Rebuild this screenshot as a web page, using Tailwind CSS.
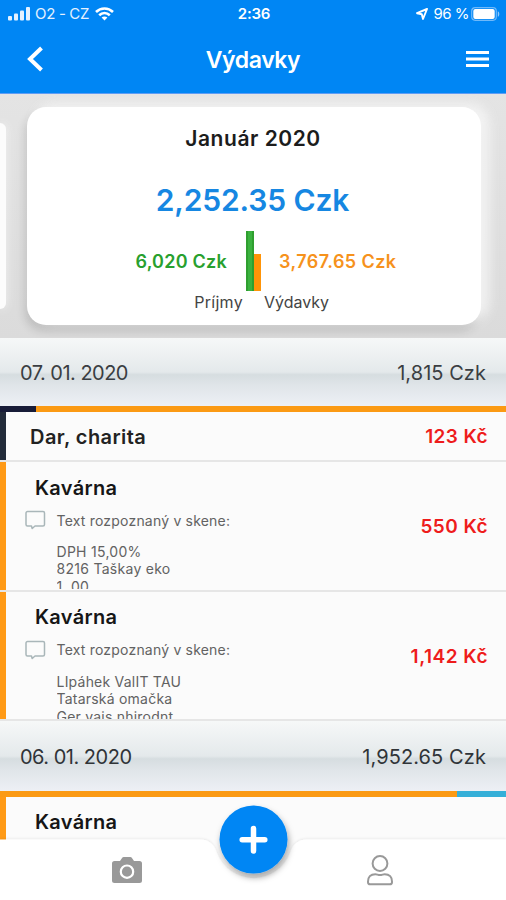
<!DOCTYPE html>
<html lang="sk">
<head>
<meta charset="utf-8">
<title>Výdavky</title>
<script src="https://cdn.jsdelivr.net/npm/@tailwindcss/browser@4"></script>
</head>
<body class="bg-white">
<div class="relative flex h-[900px] w-[506px] flex-col overflow-hidden bg-[#fbfbfb] font-['Inter','Liberation_Sans',sans-serif] whitespace-nowrap text-[#222]">

  <header class="h-[94px] shrink-0 border-b border-[#5f9df5] bg-[#0086f4] text-white">
    <div class="grid h-[26px] grid-cols-3 items-center pl-2 pr-[6px] text-[15px] leading-[27px]">
      <div class="flex items-center">
        <svg class="mr-[5px] h-[14px] w-[22px]" viewBox="0 0 22 14" fill="#e4f1ff"><rect x="0" y="9" width="4" height="4.500" rx="1"/><rect x="6" y="6.500" width="4" height="7" rx="1"/><rect x="12" y="3.500" width="4" height="10" rx="1"/><rect x="18" y="0" width="4" height="13.500" rx="1"/></svg>
        <span class="mr-[6px] tracking-[-0.32px] text-[#e4f1ff]">O2 - CZ</span>
        <svg class="h-[14px] w-[19px]" viewBox="0 0 19 14" fill="none" stroke="#fff" stroke-width="2.600"><path d="M1 5C5.800.4 13.200.4 18 5"/><path d="M4.200 8.300C7.300 5.400 11.700 5.400 14.800 8.300"/><path d="M9.500 13.600L6.600 10.600C8.300 9.200 10.700 9.200 12.400 10.600Z" fill="#fff" stroke="none"/></svg>
      </div>
      <div class="text-center font-semibold tracking-[-0.2px]">2:36</div>
      <div class="flex items-center justify-end">
        <svg class="mr-[5px] h-[12px] w-[12px]" viewBox="0 0 12 12" fill="none" stroke="#fff" stroke-width="1.900" stroke-linejoin="round"><path d="M11 1L1 5.200L5.800 6.200L7 11Z"/></svg>
        <span class="mr-[2px] tracking-[-0.5px]">96 %</span>
        <svg class="h-[14px] w-[29px]" viewBox="0 0 29 14"><rect x=".7" y=".7" width="24.600" height="12.600" rx="3.500" fill="none" stroke="#6fb9fa" stroke-width="1.200"/><rect x="2.300" y="2" width="21.400" height="10" rx="2" fill="#fff"/><path d="M26.800 4.200c2 .8 2 4.800 0 5.600z" fill="#8fc8fb"/></svg>
      </div>
    </div>
    <div class="flex h-[66px] items-center justify-between pl-[26px] pr-[17px]">
      <svg class="h-[26px] w-[18px]" viewBox="0 0 18 26" fill="none" stroke="#fff" stroke-width="4"><path d="M15.500 2L4 13L15.500 24"/></svg>
      <h1 class="mr-[4px] mt-px text-[23px] font-semibold leading-[30px] tracking-[-0.4px]">Výdavky</h1>
      <svg class="h-[18px] w-[23px]" viewBox="0 0 23 18" fill="#fff"><rect y="1" width="23" height="3"/><rect y="7.500" width="23" height="3"/><rect y="14" width="23" height="3"/></svg>
    </div>
  </header>

  <section class="flex h-[244px] shrink-0 overflow-hidden bg-linear-to-b from-[#e4e4e4] to-[#dbdbdb] pt-[13px]">
    <div class="mt-[16px] h-[186px] w-[6px] shrink-0 rounded-r-[6px] bg-[#fcfcfc] shadow-[0_0_8px_#f4f4f4]"></div>
    <div class="ml-[21px] h-[218px] w-[454px] shrink-0 rounded-[19px] bg-white shadow-[8px_-3px_12px_rgba(246,246,246,0.9),-2px_6px_10px_rgba(0,0,0,0.14)]">
      <div class="pt-[17px] pr-[2px] text-center text-[21px] font-semibold leading-[30px] tracking-[0.54px] text-[#1c1c1c]">Január 2020</div>
      <div class="mt-[26px] pr-[3px] text-center text-[30px] font-semibold leading-[40px] tracking-[-0.12px] text-[#1687e2]">2,252.35 Czk</div>
      <div class="mt-[11px] flex h-[60px] text-[18px] font-semibold leading-[61px]">
        <div class="w-[200px] text-right tracking-[0.24px] text-[#28a02e]">6,020 Czk</div>
        <div class="ml-[19px] flex items-end">
          <div class="h-[60px] w-[8px] border-x-2 border-[#2f9f2f] bg-[#3bb23f]"></div>
          <div class="h-[37px] w-[7px] bg-[#ff9408]"></div>
        </div>
        <div class="ml-[18px] tracking-[0.42px] text-[#f6921c]">3,767.65 Czk</div>
      </div>
      <div class="flex text-[16px] leading-[22px] text-[#444]">
        <div class="w-[216px] text-right tracking-[0.3px]">Príjmy</div>
        <div class="ml-[21px]">Výdavky</div>
      </div>
    </div>
  </section>

  <main class="shrink-0">
    <div class="flex h-[68px] items-center justify-between bg-[linear-gradient(to_bottom,#f6f8f8_0%,#e4e9eb_50%,#d6dde0_54%,#e0e5e9_70%,#edf0f5_100%)] pt-px pl-[20px] pr-[20px] text-[20px] text-[#3a3e42]">
      <span class="tracking-[-0.52px]">07. 01. 2020</span><span class="tracking-[0.05px]">1,815 Czk</span>
    </div>
    <div class="flex h-[6px]"><div class="w-[36px] bg-[#181c38]"></div><div class="grow bg-[#fb9a14]"></div></div>

    <div class="flex h-[50px] border-b-2 border-b-[#e6e6e6]">
      <div class="w-[6px] bg-[#222b3a]"></div>
      <div class="flex grow items-center justify-between pt-[2px] pl-[24px] pr-[18px]">
        <span class="text-[20px] font-semibold tracking-[0.44px]">Dar, charita</span>
        <span class="text-[19px] font-semibold tracking-[0.4px] text-[#ee1c1c]">123 Kč</span>
      </div>
    </div>

    <div class="flex h-[130px] overflow-hidden border-b-2 border-b-[#e6e6e6]">
      <div class="w-[6px] bg-[#ff9a16]"></div>
      <div class="grow pt-[11px]">
        <div class="pl-[29px] text-[20px] font-semibold leading-[30px] tracking-[0.3px] text-[#161616]">Kavárna</div>
        <div class="flex pt-[7px] pl-[19px]">
          <svg class="mr-[10.500px] h-[20px] w-[21px]" viewBox="0 0 21 20" fill="none" stroke="#a9b6b9" stroke-width="1.500" stroke-linejoin="round"><path d="M2.500 1.500h15.500a1.500 1.500 0 0 1 1.500 1.500v11.500a1.500 1.500 0 0 1-1.500 1.500H10L7.200 18.500L6.500 16h-4A1.500 1.500 0 0 1 1 14.500V3A1.500 1.500 0 0 1 2.500 1.500Z"/></svg>
          <div class="text-[14px] text-[#626262]">
            <div class="leading-[21px] tracking-[0.2px]">Text rozpoznaný v skene:</div>
            <div class="mt-[12px] h-[46px] overflow-hidden leading-[17.300px] tracking-[0.28px]">DPH 15,00%<br>8216 Taškay eko<br>1. 00</div>
          </div>
        </div>
      </div>
      <span class="mt-[3px] mr-[18px] self-center text-[19px] font-semibold tracking-[0.45px] text-[#ee1c1c]">550 Kč</span>
    </div>

    <div class="flex h-[129px] overflow-hidden border-b-2 border-b-[#e6e6e6]">
      <div class="w-[6px] bg-[#ff9a16]"></div>
      <div class="grow pt-[10px]">
        <div class="pl-[29px] text-[20px] font-semibold leading-[30px] tracking-[0.3px] text-[#161616]">Kavárna</div>
        <div class="flex pt-[8px] pl-[19px]">
          <svg class="mr-[10.500px] h-[20px] w-[21px]" viewBox="0 0 21 20" fill="none" stroke="#a9b6b9" stroke-width="1.500" stroke-linejoin="round"><path d="M2.500 1.500h15.500a1.500 1.500 0 0 1 1.500 1.500v11.500a1.500 1.500 0 0 1-1.500 1.500H10L7.200 18.500L6.500 16h-4A1.500 1.500 0 0 1 1 14.500V3A1.500 1.500 0 0 1 2.500 1.500Z"/></svg>
          <div class="text-[14px] text-[#626262]">
            <div class="leading-[20px] tracking-[0.2px]">Text rozpoznaný v skene:</div>
            <div class="mt-[13px] h-[46px] overflow-hidden leading-[17.300px] tracking-[0.22px]">LIpáhek ValIT TAU<br>Tatarská omačka<br>Ger vais nhirodnt</div>
          </div>
        </div>
      </div>
      <span class="mt-[4px] mr-[18px] self-center text-[19px] font-semibold tracking-[0.5px] text-[#ee1c1c]">1,142 Kč</span>
    </div>

    <div class="flex h-[70px] items-center justify-between bg-[linear-gradient(to_bottom,#f6f8f8_0%,#e4e9eb_50%,#d6dde0_54%,#e0e5e9_70%,#edf0f5_100%)] pt-px pl-[20px] pr-[20px] text-[20px] text-[#303438]">
      <span class="tracking-[-0.5px]">06. 01. 2020</span><span class="tracking-[0.1px]">1,952.65 Czk</span>
    </div>
    <div class="flex h-[6px]"><div class="w-[457px] bg-[#fb9a14]"></div><div class="grow bg-[#35afd8]"></div></div>
    <div class="flex h-[60px]">
      <div class="w-[6px] bg-[#ff9a16]"></div>
      <div class="pt-[10px] pl-[29px] text-[20px] font-semibold leading-[30px] tracking-[0.3px] text-[#161616]">Kavárna</div>
    </div>
  </main>

  <nav class="absolute inset-x-0 bottom-0 h-[105px]">
    <svg class="h-[105px] w-[506px]" viewBox="0 0 506 105" fill="none">
      <defs>
        <filter id="lift" x="-30%" y="-30%" width="160%" height="170%"><feDropShadow dx="1.500" dy="4" stdDeviation="3" flood-color="#000" flood-opacity=".35"/></filter>
        <filter id="edge" x="-5%" y="-20%" width="110%" height="140%"><feDropShadow dx="0" dy="-1" stdDeviation="1" flood-color="#000" flood-opacity=".07"/></filter>
      </defs>
      <path filter="url(#edge)" fill="#fff" d="M0 44.500H200C209 44.500 214 49 217 58A39 39 0 0 0 290 58C293 49 298 44.500 307 44.500H506V105H0Z"/>
      <circle cx="253.500" cy="44.500" r="34" fill="#0086f4" filter="url(#lift)"/>
      <path d="M253.500 33.500v22.500M242.200 44.700h22.600" stroke="#fff" stroke-width="5.500" stroke-linecap="round"/>
      <path fill="#999" fill-rule="evenodd" d="M114.500 66h5.500l2.200-3.300q.5-.7 1.500-.7h6.600q1 0 1.500.7L134 66h5.500q2.500 0 2.500 2.500V85.500q0 2.500-2.500 2.500h-25q-2.500 0-2.500-2.500V68.500q0-2.500 2.500-2.500Z"/>
      <circle cx="127" cy="76.700" r="6.200" stroke="#fff" stroke-width="2.200"/>
      <circle cx="380" cy="68.500" r="7.400" stroke="#999" stroke-width="2"/>
      <path d="M375.300 79.200C370.500 79.200 368 82.300 368 86.500V87.200Q368 89.300 370.200 89.300H389.800Q392 89.300 392 87.200V86.500C392 82.300 389.500 79.200 384.700 79.200C383 79.200 382 80.100 380 80.100S377 79.200 375.300 79.200Z" stroke="#999" stroke-width="2"/>
    </svg>
  </nav>
</div>
</body>
</html>
